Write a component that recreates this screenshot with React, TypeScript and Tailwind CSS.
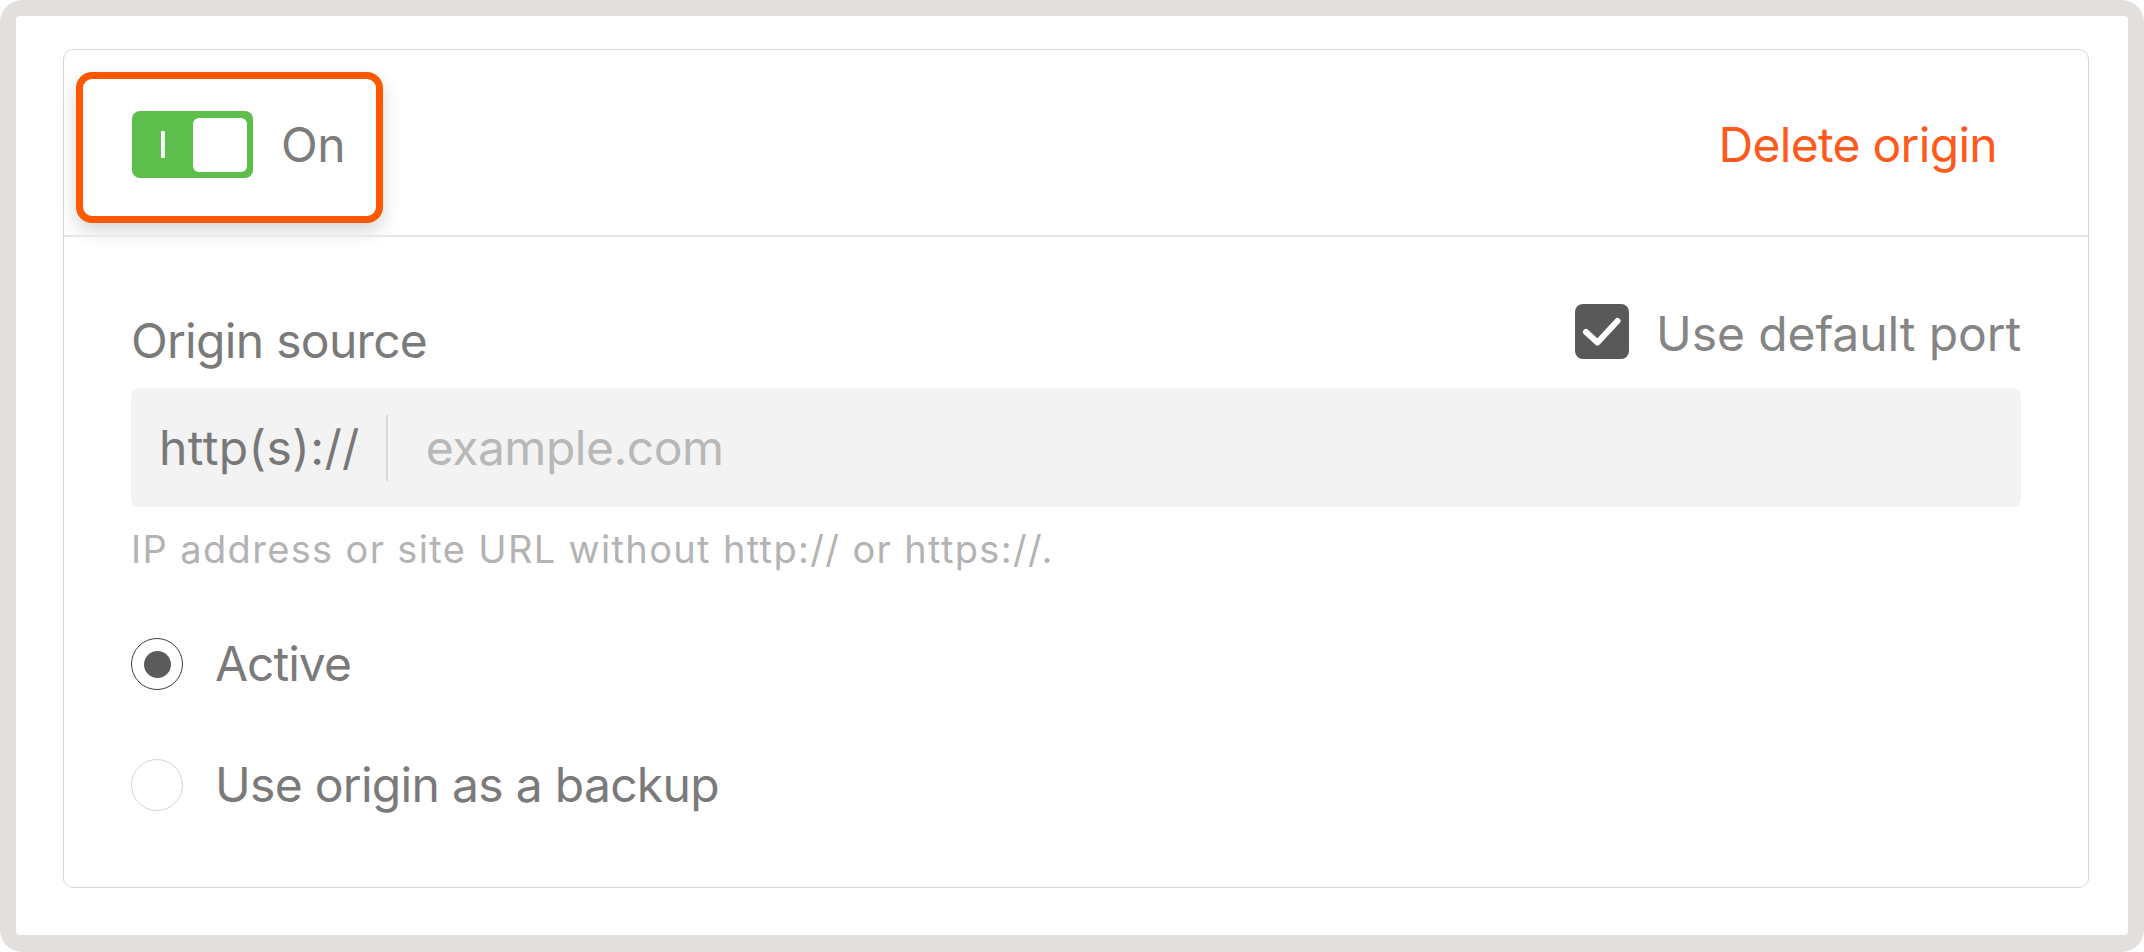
import React from "react";

export default function App() {
  return (
    <div className="w-[2144px] h-[952px] bg-white" style={{ fontFamily: "Inter, 'Noto Sans', sans-serif" }}>
      <div className="w-full h-full bg-[#e2dfdd] rounded-[22px] pt-[16px] px-[16px] pb-[17px]">
        <div className="w-full h-full bg-white rounded-[4px] pt-[33px] pl-[47px] pr-[39px]">
          <div className="w-[2026px] h-[839px] border-[1.5px] border-[#d6d6d6] rounded-[10px] flex flex-col">
            {/* Header */}
            <div className="h-[185px] flex items-center justify-between pl-[12px] pr-[91px]">
              <div className="mt-[10px] w-[307px] h-[151px] border-[7px] border-[#ff5800] rounded-[16px] bg-white shadow-[0_8px_18px_rgba(0,0,0,0.16)] flex items-center pl-[49px] gap-[28px]">
                <div className="mb-[6px] w-[121px] h-[67px] rounded-[8px] bg-[#5ebe4b] flex items-center justify-between pl-[29px] pr-[6px]">
                  <div className="w-[4px] h-[27px] bg-white rounded-[1px]" />
                  <div className="w-[54px] h-[54px] rounded-[6px] bg-white" />
                </div>
                <span className="mb-[6px] text-[48px] leading-[56px] text-[#7c7c7c] tracking-[-0.5px]">On</span>
              </div>
              <span className="mt-[4px] text-[48px] leading-[56px] text-[#fd5a1c] tracking-[-0.7px]">Delete origin</span>
            </div>
            <div className="h-[2px] bg-[#e8e8e8]" />
            {/* Body */}
            <div className="pt-[67px] px-[67px] flex flex-col">
              <div className="flex items-start justify-between">
                <span className="pt-[9px] text-[48px] leading-[55px] text-[#7a7a7a] tracking-[-0.7px]">Origin source</span>
                <div className="flex items-center h-[55px] gap-[27px]">
                  <div className="w-[54px] h-[55px] rounded-[8px] bg-[#595959] flex items-center justify-center">
                    <svg width="54" height="55" viewBox="0 0 54 55">
                      <path d="M11 28 L22.5 38.5 L42.5 17" fill="none" stroke="white" strokeWidth="6" strokeLinecap="round" strokeLinejoin="round" />
                    </svg>
                  </div>
                  <span className="mt-[4px] text-[48px] leading-[55px] text-[#858585] tracking-[-0.1px]">Use default port</span>
                </div>
              </div>
              <div className="mt-[20px] h-[119px] rounded-[8px] bg-[#f3f3f3] flex items-center pl-[28px]">
                <span className="text-[48px] leading-[56px] text-[#787878] tracking-[0.4px]">http(s)://</span>
                <div className="ml-[26px] w-[2px] h-[66px] bg-[#dadada]" />
                <span className="ml-[38px] text-[48px] leading-[56px] text-[#b8b8b8] tracking-[-0.5px]">example.com</span>
              </div>
              <div className="mt-[19px] text-[38px] leading-[46px] text-[#b3b3b3] tracking-[1.35px]">
                IP address or site URL without http:// or https://.
              </div>
              <div className="mt-[66px] flex items-center h-[52px] gap-[32px]">
                <div className="w-[52px] h-[52px] rounded-full border-[1.5px] border-[#3f3f3f] flex items-center justify-center">
                  <div className="w-[27px] h-[27px] rounded-full bg-[#5b5b5b]" />
                </div>
                <span className="text-[48px] leading-[56px] text-[#7a7a7a] tracking-[-1px]">Active</span>
              </div>
              <div className="mt-[69px] flex items-center h-[52px] gap-[32px]">
                <div className="w-[52px] h-[52px] rounded-full border-[1.5px] border-[#d4d4d4]" />
                <span className="text-[48px] leading-[56px] text-[#7a7a7a] tracking-[-0.7px]">Use origin as a backup</span>
              </div>
            </div>
          </div>
        </div>
      </div>
    </div>
  );
}
